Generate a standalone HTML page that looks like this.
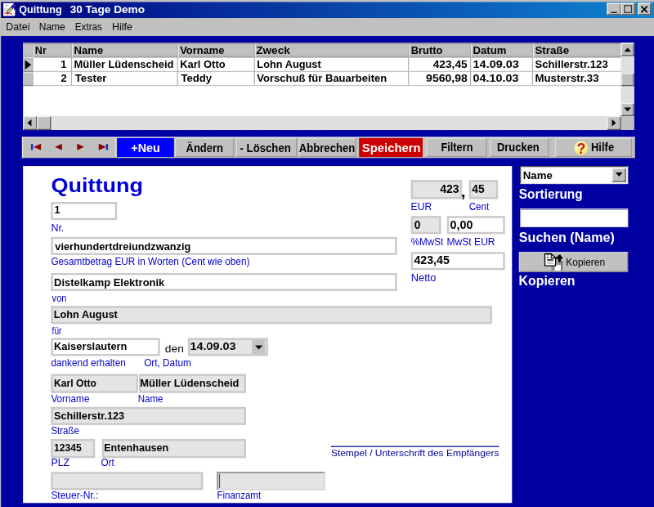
<!DOCTYPE html>
<html lang="de"><head><meta charset="utf-8"><title>Quittung 30 Tage Demo</title>
<style>
html,body{margin:0;padding:0;}
html{width:654px;height:507px;overflow:hidden;background:#0000a0;}
body{width:654px;height:507px;overflow:hidden;background:#0000a0;position:relative;font-family:"Liberation Sans",sans-serif;}
.b{position:absolute;box-sizing:border-box;}
.t{position:absolute;white-space:pre;line-height:20px;height:20px;transform-origin:0 50%;}
svg{position:absolute;overflow:visible;}

.fld{border:2px solid #cacaca;background:#fff;}
.fldg{border:2px solid #cacaca;background:#e4e4e4;}
.btn{background:#c0c0c0;border:1px solid;border-color:#dcdcdc #9a9a9a #9a9a9a #dcdcdc;}
.raised{background:#c0c0c0;border:1px solid;border-color:#f4f4f4 #555 #555 #f4f4f4;}
.dither{background-color:#dfdfdf;background-image:repeating-conic-gradient(#fff 0 25%,#c0c0c0 0 50%);background-size:1.635px 1.635px;}

#root{position:absolute;left:0;top:0;width:800px;height:620px;overflow:hidden;background:#0000a0;transform:scale(0.8175);transform-origin:0 0;will-change:transform;}
#inner{position:absolute;left:0;top:0;width:654px;height:507px;transform:scale(1.22324);transform-origin:0 0;}
</style></head><body>
<div id="root"><div id="inner">
<div class="b" style="left:0.00px;top:0.00px;width:654.00px;height:36.00px;background:#c0c0c0;"></div>
<div class="b" style="left:0.00px;top:36.00px;width:1.20px;height:471.00px;background:#b8b8d8;"></div>
<div class="b" style="left:1.1px;top:2.1px;width:653px;height:15.6px;background:linear-gradient(90deg,#000080 0%,#1084d0 100%);"></div>
<svg style="left:3.2px;top:3px" width="13" height="13" viewBox="0 0 13 13">
<rect x="0.3" y="0.2" width="10.6" height="12.6" fill="#fff"/>
<rect x="0.3" y="6.6" width="11.8" height="6.2" fill="#fff"/><rect x="0.3" y="5" width="5.4" height="5.4" fill="#dcdcdc"/>
<path d="M2 2.2 H5.5" stroke="#999" stroke-width="0.7"/>
<path d="M4.6 9.2 L9 4.6" stroke="#303010" stroke-width="2.6"/>
<path d="M4.8 9 L9 4.6" stroke="#e6e070" stroke-width="1.5"/>
<path d="M8.6 5 L12 1.4" stroke="#10108c" stroke-width="2.8"/>
<path d="M9.4 4.6 L12.2 1.6" stroke="#3a3ae0" stroke-width="1.2"/>
<path d="M3.6 10.6 L5.2 9.4" stroke="#000" stroke-width="0.9"/>
<path d="M1.6 10.6 Q2.6 9.6 3.4 10.6 T5.4 10.6 T7.4 10.6 T9.2 10.6" stroke="#e03030" stroke-width="0.9" fill="none"/>
</svg>
<span class="t" style="left:19.19px;top:-1.00px;font-size:10.5px;color:#fff;font-weight:bold;transform:scaleX(0.9805);">Quittung</span>
<span class="t" style="left:69.95px;top:-1.00px;font-size:10.5px;color:#fff;font-weight:bold;transform:scaleX(1.0606);">30 Tage Demo</span>
<div class="b raised" style="left:607.20px;top:3.40px;width:14.10px;height:12.00px;"></div>
<div class="b raised" style="left:621.30px;top:3.40px;width:14.10px;height:12.00px;"></div>
<div class="b raised" style="left:637.80px;top:3.40px;width:13.60px;height:12.00px;"></div>
<div class="b" style="left:610.8px;top:11.6px;width:6px;height:1.4px;background:#000"></div>
<div class="b" style="left:624.2px;top:5.3px;width:8px;height:7.6px;border:0.9px solid #333;border-top-width:1.6px"></div>
<svg style="left:641.3px;top:5.6px" width="7" height="7" viewBox="0 0 7 7"><path d="M0.3 0.3 L6.3 6.3 M6.3 0.3 L0.3 6.3" stroke="#000" stroke-width="1.4" fill="none"/></svg>
<span class="t" style="left:6.16px;top:17.30px;font-size:10px;color:#000;transform:scaleX(1.0206);">Datei</span>
<span class="t" style="left:39.19px;top:17.30px;font-size:10px;color:#000;transform:scaleX(0.9833);">Name</span>
<span class="t" style="left:75.21px;top:17.30px;font-size:10px;color:#000;transform:scaleX(0.9568);">Extras</span>
<span class="t" style="left:111.76px;top:17.30px;font-size:10px;color:#000;transform:scaleX(1.0133);">Hilfe</span>
<div class="b" style="left:22.50px;top:43.00px;width:611.90px;height:86.60px;background:#fff;"></div>
<div class="b" style="left:22.50px;top:43.00px;width:598.40px;height:14.00px;background:#c0c0c0;"></div>
<div class="b" style="left:22.50px;top:43.00px;width:10.10px;height:42.40px;background:#c0c0c0;"></div>
<div class="b" style="left:22.50px;top:56.50px;width:598.40px;height:1.00px;background:#c4c4c4;"></div>
<div class="b" style="left:22.50px;top:70.70px;width:598.40px;height:1.00px;background:#c4c4c4;"></div>
<div class="b" style="left:22.50px;top:84.90px;width:598.40px;height:1.00px;background:#c4c4c4;"></div>
<div class="b" style="left:22.50px;top:56.40px;width:598.40px;height:0.80px;background:#9c9c9c;"></div>
<div class="b" style="left:32.10px;top:43.00px;width:1.00px;height:42.40px;background:#b0b0b0;"></div>
<div class="b" style="left:33.10px;top:43.00px;width:0.80px;height:14.00px;background:#e8e8e8;"></div>
<div class="b" style="left:70.80px;top:43.00px;width:1.00px;height:42.40px;background:#b0b0b0;"></div>
<div class="b" style="left:71.80px;top:43.00px;width:0.80px;height:14.00px;background:#e8e8e8;"></div>
<div class="b" style="left:177.00px;top:43.00px;width:1.00px;height:42.40px;background:#b0b0b0;"></div>
<div class="b" style="left:178.00px;top:43.00px;width:0.80px;height:14.00px;background:#e8e8e8;"></div>
<div class="b" style="left:253.80px;top:43.00px;width:1.00px;height:42.40px;background:#b0b0b0;"></div>
<div class="b" style="left:254.80px;top:43.00px;width:0.80px;height:14.00px;background:#e8e8e8;"></div>
<div class="b" style="left:408.00px;top:43.00px;width:1.00px;height:42.40px;background:#b0b0b0;"></div>
<div class="b" style="left:409.00px;top:43.00px;width:0.80px;height:14.00px;background:#e8e8e8;"></div>
<div class="b" style="left:469.50px;top:43.00px;width:1.00px;height:42.40px;background:#b0b0b0;"></div>
<div class="b" style="left:470.50px;top:43.00px;width:0.80px;height:14.00px;background:#e8e8e8;"></div>
<div class="b" style="left:532.10px;top:43.00px;width:1.00px;height:42.40px;background:#b0b0b0;"></div>
<div class="b" style="left:533.10px;top:43.00px;width:0.80px;height:14.00px;background:#e8e8e8;"></div>
<div class="b" style="left:22.50px;top:57.00px;width:10.00px;height:0.80px;background:#e8e8e8;"></div>
<div class="b" style="left:22.50px;top:71.50px;width:10.00px;height:0.80px;background:#e8e8e8;"></div>
<div class="b" style="left:22.50px;top:70.60px;width:10.00px;height:0.90px;background:#8c8c8c;"></div>
<div class="b" style="left:22.50px;top:84.80px;width:10.00px;height:0.90px;background:#8c8c8c;"></div>
<div class="b" style="left:22.50px;top:43.00px;width:611.90px;height:0.70px;background:#8a8a8a;"></div>
<svg style="left:25px;top:59.8px" width="6.2" height="9.4" viewBox="0 0 6.2 9.4"><path d="M0 0 L6.2 4.7 L0 9.4 Z" fill="#000"/></svg>
<span class="t" style="left:35.31px;top:39.60px;font-size:10.5px;color:#000;font-weight:bold;transform:scaleX(0.9801);">Nr</span>
<span class="t" style="left:73.98px;top:39.60px;font-size:10.5px;color:#000;font-weight:bold;transform:scaleX(1.0205);">Name</span>
<span class="t" style="left:179.92px;top:39.60px;font-size:10.5px;color:#000;font-weight:bold;transform:scaleX(1.0061);">Vorname</span>
<span class="t" style="left:256.27px;top:39.60px;font-size:10.5px;color:#000;font-weight:bold;transform:scaleX(1.0633);">Zweck</span>
<span class="t" style="left:410.79px;top:39.60px;font-size:10.5px;color:#000;font-weight:bold;transform:scaleX(1.0042);">Brutto</span>
<span class="t" style="left:472.78px;top:39.60px;font-size:10.5px;color:#000;font-weight:bold;transform:scaleX(1.0218);">Datum</span>
<span class="t" style="left:535.30px;top:39.60px;font-size:10.5px;color:#000;font-weight:bold;transform:scaleX(1.0429);">Straße</span>
<span class="t" style="left:60.73px;top:53.80px;font-size:10.5px;color:#000;font-weight:bold;">1</span>
<span class="t" style="left:73.98px;top:53.80px;font-size:10.5px;color:#000;font-weight:bold;transform:scaleX(1.0113);">Müller Lüdenscheid</span>
<span class="t" style="left:179.78px;top:53.80px;font-size:10.5px;color:#000;font-weight:bold;transform:scaleX(1.0089);">Karl Otto</span>
<span class="t" style="left:256.59px;top:53.80px;font-size:10.5px;color:#000;font-weight:bold;transform:scaleX(0.9949);">Lohn August</span>
<span class="t" style="left:432.63px;top:53.80px;font-size:10.5px;color:#000;font-weight:bold;transform:scaleX(1.0699);">423,45</span>
<span class="t" style="left:472.76px;top:53.80px;font-size:10.5px;color:#000;font-weight:bold;transform:scaleX(1.1243);">14.09.03</span>
<span class="t" style="left:535.30px;top:53.80px;font-size:10.5px;color:#000;font-weight:bold;transform:scaleX(1.0247);">Schillerstr.123</span>
<span class="t" style="left:60.87px;top:68.00px;font-size:10.5px;color:#000;font-weight:bold;">2</span>
<span class="t" style="left:74.79px;top:68.00px;font-size:10.5px;color:#000;font-weight:bold;transform:scaleX(1.0303);">Tester</span>
<span class="t" style="left:181.19px;top:68.00px;font-size:10.5px;color:#000;font-weight:bold;transform:scaleX(1.0241);">Teddy</span>
<span class="t" style="left:257.22px;top:68.00px;font-size:10.5px;color:#000;font-weight:bold;transform:scaleX(1.0130);">Vorschuß für Bauarbeiten</span>
<span class="t" style="left:425.60px;top:68.00px;font-size:10.5px;color:#000;font-weight:bold;transform:scaleX(1.0927);">9560,98</span>
<span class="t" style="left:473.03px;top:68.00px;font-size:10.5px;color:#000;font-weight:bold;transform:scaleX(1.1177);">04.10.03</span>
<span class="t" style="left:534.87px;top:68.00px;font-size:10.5px;color:#000;font-weight:bold;transform:scaleX(1.0318);">Musterstr.33</span>
<div class="b dither" style="left:620.90px;top:43.00px;width:13.50px;height:73.00px;"></div>
<div class="b dither" style="left:22.50px;top:116.00px;width:598.40px;height:13.60px;"></div>
<div class="b" style="left:620.90px;top:116.00px;width:13.50px;height:13.60px;background:#c0c0c0;"></div>
<div class="b raised" style="left:620.90px;top:43.00px;width:13.50px;height:13.40px;"></div>
<div class="b raised" style="left:620.90px;top:73.00px;width:13.50px;height:12.80px;"></div>
<div class="b raised" style="left:620.90px;top:102.70px;width:13.50px;height:13.30px;"></div>
<div class="b raised" style="left:22.50px;top:116.00px;width:14.30px;height:13.60px;"></div>
<div class="b raised" style="left:36.80px;top:116.00px;width:14.10px;height:13.60px;"></div>
<div class="b raised" style="left:606.80px;top:116.00px;width:14.10px;height:13.60px;"></div>
<svg style="left:0;top:0" width="654" height="507"><path d="M624.1 51.8 L631.1 51.8 L627.6 47.8 Z" fill="#000"/></svg>
<svg style="left:0;top:0" width="654" height="507"><path d="M624.1 107.5 L631.1 107.5 L627.6 111.5 Z" fill="#000"/></svg>
<svg style="left:0;top:0" width="654" height="507"><path d="M31.4 119.3 L31.4 126.3 L27.4 122.8 Z" fill="#000"/></svg>
<svg style="left:0;top:0" width="654" height="507"><path d="M612.0 119.3 L612.0 126.3 L616.0 122.8 Z" fill="#000"/></svg>
<div class="b" style="left:22.30px;top:137.00px;width:612.30px;height:21.00px;background:#c0c0c0;"></div>
<div class="b" style="left:22.30px;top:137.00px;width:612.30px;height:0.90px;background:#ececec;"></div>
<div class="b" style="left:22.30px;top:137.00px;width:0.90px;height:21.00px;background:#ececec;"></div>
<svg style="left:0;top:0" width="654" height="507"><path d="M41.0 143.7 L41.0 150.3 L33.599999999999994 147 Z" fill="#8b0000"/></svg>
<div class="b" style="left:31.00px;top:143.60px;width:1.80px;height:6.80px;background:#2828c0;"></div>
<svg style="left:0;top:0" width="654" height="507"><path d="M62.0 143.7 L62.0 150.3 L55.0 147 Z" fill="#8b0000"/></svg>
<svg style="left:0;top:0" width="654" height="507"><path d="M77.1 143.7 L77.1 150.3 L84.1 147 Z" fill="#8b0000"/></svg>
<svg style="left:0;top:0" width="654" height="507"><path d="M98.7 143.7 L98.7 150.3 L106.10000000000001 147 Z" fill="#8b0000"/></svg>
<div class="b" style="left:106.40px;top:143.60px;width:1.80px;height:6.80px;background:#2828c0;"></div>
<div class="b" style="left:114.60px;top:138.00px;width:1.80px;height:19.00px;background:#dcdcdc;"></div>
<div class="b" style="left:116.60px;top:138.00px;width:57.40px;height:18.80px;background:#0000ff;"></div>
<span class="t" style="left:131.00px;top:137.60px;font-size:11.3px;color:#fff;font-weight:bold;transform:scaleX(1.0402);">+Neu</span>
<div class="b btn" style="left:175.00px;top:138.00px;width:58.80px;height:18.80px;"></div>
<span class="t" style="left:185.73px;top:137.60px;font-size:11.3px;color:#000;font-weight:bold;transform:scaleX(0.9407);">Ändern</span>
<div class="b btn" style="left:235.50px;top:138.00px;width:61.10px;height:18.80px;"></div>
<span class="t" style="left:240.30px;top:137.60px;font-size:11.3px;color:#000;font-weight:bold;transform:scaleX(0.9529);">- Löschen</span>
<div class="b btn" style="left:298.60px;top:138.00px;width:57.60px;height:18.80px;"></div>
<span class="t" style="left:299.43px;top:137.60px;font-size:11.3px;color:#000;font-weight:bold;transform:scaleX(0.9491);">Abbrechen</span>
<div class="b" style="left:358.60px;top:138.00px;width:64.40px;height:18.80px;background:#cc0000;"></div>
<div class="b" style="left:423.00px;top:138.00px;width:1.00px;height:18.80px;background:#e4e4e4;"></div>
<span class="t" style="left:361.67px;top:137.90px;font-size:12px;color:#fff;font-weight:bold;transform:scaleX(1.0111);">Speichern</span>
<div class="b btn" style="left:426.00px;top:138.00px;width:61.20px;height:18.80px;"></div>
<span class="t" style="left:440.69px;top:136.60px;font-size:11.3px;color:#000;font-weight:bold;transform:scaleX(0.9250);">Filtern</span>
<div class="b btn" style="left:490.00px;top:138.00px;width:59.20px;height:18.80px;"></div>
<span class="t" style="left:497.29px;top:136.60px;font-size:11.3px;color:#000;font-weight:bold;transform:scaleX(0.9369);">Drucken</span>
<div class="b btn" style="left:555.00px;top:138.00px;width:77.00px;height:18.80px;"></div>
<span class="t" style="left:591.28px;top:136.60px;font-size:11.3px;color:#000;font-weight:bold;transform:scaleX(0.9428);">Hilfe</span>
<svg style="left:573.8px;top:140.8px" width="14" height="14.4" viewBox="0 0 14 14.4">
<defs><radialGradient id="hg" cx="0.4" cy="0.35" r="0.7"><stop offset="0" stop-color="#fffbd0"/><stop offset="1" stop-color="#ffe860"/></radialGradient></defs>
<ellipse cx="7" cy="7.1" rx="6.8" ry="6.9" fill="url(#hg)"/>
<text x="7.1" y="12.4" text-anchor="middle" font-family="Liberation Sans, sans-serif" font-weight="bold" font-size="14.6" fill="#cc1414">?</text></svg>
<div class="b" style="left:22.50px;top:165.60px;width:489.90px;height:337.40px;background:#fff;"></div>
<span class="t" style="left:50.82px;top:175.20px;font-size:19.4px;color:#0000dc;font-weight:bold;transform:scaleX(1.1388);">Quittung</span>
<div class="b fld" style="left:51.20px;top:201.50px;width:65.60px;height:18.10px;"></div>
<span class="t" style="left:54.35px;top:200.30px;font-size:10.4px;color:#000;font-weight:bold;">1</span>
<span class="t" style="left:51.06px;top:217.80px;font-size:9.9px;color:#0000c8;transform:scaleX(1.0330);">Nr.</span>
<div class="b fld" style="left:51.20px;top:237.40px;width:345.40px;height:18.00px;"></div>
<span class="t" style="left:54.87px;top:236.60px;font-size:10.4px;color:#000;font-weight:bold;transform:scaleX(1.0045);">vierhundertdreiundzwanzig</span>
<span class="t" style="left:50.82px;top:251.60px;font-size:9.9px;color:#0000c8;transform:scaleX(0.9765);">Gesamtbetrag EUR in Worten (Cent wie oben)</span>
<div class="b fld" style="left:51.30px;top:273.40px;width:345.30px;height:17.60px;"></div>
<span class="t" style="left:53.79px;top:273.00px;font-size:10.4px;color:#000;font-weight:bold;transform:scaleX(1.0178);">Distelkamp Elektronik</span>
<span class="t" style="left:51.78px;top:288.50px;font-size:9.9px;color:#0000c8;transform:scaleX(0.9153);">von</span>
<div class="b fldg" style="left:51.30px;top:306.00px;width:440.30px;height:17.80px;"></div>
<span class="t" style="left:53.80px;top:305.00px;font-size:10.4px;color:#000;font-weight:bold;">Lohn August</span>
<span class="t" style="left:51.70px;top:320.50px;font-size:9.9px;color:#0000c8;transform:scaleX(0.8418);">für</span>
<div class="b fld" style="left:51.30px;top:338.00px;width:108.30px;height:17.60px;"></div>
<span class="t" style="left:53.79px;top:337.30px;font-size:10.4px;color:#000;font-weight:bold;transform:scaleX(1.0123);">Kaiserslautern</span>
<span class="t" style="left:164.52px;top:337.50px;font-size:11px;color:#000;transform:scaleX(1.0240);">den</span>
<span class="t" style="left:50.89px;top:353.20px;font-size:9.9px;color:#0000c8;transform:scaleX(0.9793);">dankend erhalten</span>
<span class="t" style="left:143.84px;top:353.20px;font-size:9.9px;color:#0000c8;transform:scaleX(0.9768);">Ort, Datum</span>
<div class="b fldg" style="left:187.80px;top:338.00px;width:79.80px;height:18.00px;"></div>
<span class="t" style="left:190.46px;top:337.00px;font-size:10.4px;color:#000;font-weight:bold;transform:scaleX(1.1351);">14.09.03</span>
<div class="b" style="left:252.40px;top:340.20px;width:13.00px;height:13.80px;background:#c4c4c4;"></div>
<svg style="left:0;top:0" width="654" height="507"><path d="M255.10000000000002 345.4 L262.5 345.4 L258.8 349.4 Z" fill="#000"/></svg>
<div class="b fldg" style="left:51.30px;top:374.40px;width:86.30px;height:18.60px;"></div>
<span class="t" style="left:53.53px;top:374.00px;font-size:10.4px;color:#000;font-weight:bold;transform:scaleX(0.9540);">Karl Otto</span>
<div class="b fldg" style="left:138.60px;top:374.40px;width:107.60px;height:18.60px;"></div>
<span class="t" style="left:140.09px;top:374.00px;font-size:10.4px;color:#000;font-weight:bold;transform:scaleX(1.0158);">Müller Lüdenscheid</span>
<span class="t" style="left:51.45px;top:389.00px;font-size:9.9px;color:#0000c8;transform:scaleX(0.9731);">Vorname</span>
<span class="t" style="left:138.12px;top:389.00px;font-size:9.9px;color:#0000c8;transform:scaleX(0.9535);">Name</span>
<div class="b fldg" style="left:51.30px;top:406.60px;width:194.90px;height:18.80px;"></div>
<span class="t" style="left:53.91px;top:406.00px;font-size:10.4px;color:#000;font-weight:bold;">Schillerstr.123</span>
<span class="t" style="left:51.08px;top:421.00px;font-size:9.9px;color:#0000c8;transform:scaleX(0.9537);">Straße</span>
<div class="b fldg" style="left:51.30px;top:439.00px;width:43.50px;height:19.00px;"></div>
<span class="t" style="left:53.58px;top:438.40px;font-size:10.4px;color:#000;font-weight:bold;transform:scaleX(0.9571);">12345</span>
<div class="b fldg" style="left:101.80px;top:439.00px;width:144.40px;height:19.00px;"></div>
<span class="t" style="left:103.90px;top:438.40px;font-size:10.4px;color:#000;font-weight:bold;transform:scaleX(0.9912);">Entenhausen</span>
<span class="t" style="left:50.66px;top:453.30px;font-size:9.9px;color:#0000c8;transform:scaleX(1.0277);">PLZ</span>
<span class="t" style="left:101.34px;top:453.30px;font-size:9.9px;color:#0000c8;transform:scaleX(0.9703);">Ort</span>
<div class="b fldg" style="left:51.30px;top:471.60px;width:151.70px;height:18.80px;"></div>
<div class="b" style="left:217.00px;top:471.60px;width:107.80px;height:18.80px;background:#e4e4e4;border:1.5px solid;border-color:#707070 #d0d0d0 #d0d0d0 #707070;"></div>
<div class="b" style="left:219.40px;top:474.00px;width:1.00px;height:14.00px;background:#555;"></div>
<span class="t" style="left:51.06px;top:485.50px;font-size:9.9px;color:#0000c8;transform:scaleX(0.9908);">Steuer-Nr.:</span>
<span class="t" style="left:216.52px;top:485.50px;font-size:9.9px;color:#0000c8;transform:scaleX(0.9511);">Finanzamt</span>
<div class="b" style="left:331.30px;top:445.90px;width:167.90px;height:0.90px;background:#000090;"></div>
<span class="t" style="left:331.16px;top:442.70px;font-size:9.6px;color:#000090;transform:scaleX(1.0200);">Stempel / Unterschrift des Empfängers</span>
<div class="b fldg" style="left:411.20px;top:180.00px;width:50.80px;height:19.00px;"></div>
<span class="t" style="left:440.43px;top:178.60px;font-size:11.6px;color:#000;font-weight:bold;transform:scaleX(0.9913);">423</span>
<span class="t" style="left:460.85px;top:182.20px;font-size:17px;color:#000;font-weight:bold;">,</span>
<div class="b fldg" style="left:468.60px;top:180.00px;width:29.40px;height:19.00px;"></div>
<span class="t" style="left:471.83px;top:178.80px;font-size:11.6px;color:#000;font-weight:bold;transform:scaleX(0.9668);">45</span>
<span class="t" style="left:410.88px;top:196.80px;font-size:9.9px;color:#0000c8;">EUR</span>
<span class="t" style="left:468.52px;top:196.80px;font-size:9.9px;color:#0000c8;transform:scaleX(0.9634);">Cent</span>
<div class="b fldg" style="left:411.20px;top:216.00px;width:29.60px;height:17.60px;"></div>
<span class="t" style="left:414.35px;top:214.50px;font-size:11.200000000000001px;color:#000;font-weight:bold;">0</span>
<div class="b fld" style="left:447.00px;top:216.00px;width:58.40px;height:17.60px;"></div>
<span class="t" style="left:449.93px;top:214.50px;font-size:11.200000000000001px;color:#000;font-weight:bold;transform:scaleX(1.0484);">0,00</span>
<span class="t" style="left:411.07px;top:232.20px;font-size:9.9px;color:#0000c8;transform:scaleX(0.9656);">%MwSt</span>
<span class="t" style="left:446.79px;top:232.20px;font-size:9.9px;color:#0000c8;">MwSt EUR</span>
<div class="b fld" style="left:411.20px;top:252.40px;width:94.20px;height:17.60px;"></div>
<span class="t" style="left:414.23px;top:250.40px;font-size:11.200000000000001px;color:#000;font-weight:bold;transform:scaleX(1.0356);">423,45</span>
<span class="t" style="left:410.83px;top:268.00px;font-size:9.9px;color:#0000c8;transform:scaleX(1.0647);">Netto</span>
<div class="b" style="left:519.60px;top:166.00px;width:108.20px;height:17.60px;background:#fff;border:1.2px solid;border-color:#404040 #e0e0e0 #e0e0e0 #404040;"></div>
<span class="t" style="left:522.87px;top:165.00px;font-size:11px;color:#000;font-weight:bold;transform:scaleX(0.9845);">Name</span>
<div class="b raised" style="left:612.40px;top:167.80px;width:13.20px;height:14.60px;"></div>
<svg style="left:0;top:0" width="654" height="507"><path d="M615.6 172.5 L622.6 172.5 L619.1 176.5 Z" fill="#000"/></svg>
<span class="t" style="left:519.25px;top:185.40px;font-size:13px;color:#fff;font-weight:bold;transform:scaleX(0.9673);">Sortierung</span>
<div class="b" style="left:519.60px;top:208.80px;width:108.20px;height:18.20px;background:#fff;border:1.2px solid;border-color:#a0a0c0 #e8e8f8 #e8e8f8 #a0a0c0;"></div>
<span class="t" style="left:519.24px;top:228.30px;font-size:13px;color:#fff;font-weight:bold;transform:scaleX(1.0100);">Suchen (Name)</span>
<div class="b" style="left:519.00px;top:251.80px;width:109.00px;height:19.80px;background:#c0c0c0;border:1px solid;border-color:#d8d8d8 #909090 #909090 #d8d8d8;"></div>
<span class="t" style="left:565.60px;top:253.00px;font-size:10px;color:#000;transform:scaleX(0.9747);">Kopieren</span>
<span class="t" style="left:518.72px;top:271.30px;font-size:13px;color:#fff;font-weight:bold;">Kopieren</span>
<svg style="left:543.6px;top:252.8px" width="19.4" height="18" viewBox="0 0 19.4 18">
<path d="M7.4 9.6 H10.8 V17.6 H7.4 Z" fill="#8c8c8c"/>
<path d="M10.8 11.2 H17.6 V17.6 H10.8 Z" fill="#fff"/>
<path d="M17.7 8 V17.6" stroke="#111" stroke-width="0.9"/>
<path d="M12.6 9 H17.4 V12 H12.6 Z" fill="#9a9a9a"/>
<path d="M0.9 0.8 H7.2 L11.6 5 V12.8 H0.9 Z" fill="#fff" stroke="#000" stroke-width="1.1"/>
<path d="M7.2 0.8 V5 H11.6" fill="none" stroke="#000" stroke-width="0.9"/>
<path d="M3.2 1.8 h1.4 M3.2 4.3 h1.4" stroke="#000" stroke-width="1.1"/>
<path d="M3.2 6.9 H9.2" stroke="#000" stroke-width="1.2"/>
<path d="M3.2 8.8 H9.2 M3.2 10.4 H9.2" stroke="#777" stroke-width="0.8" stroke-dasharray="1.4 0.7"/>
<path d="M12.2 3.4 H18.4 V6 H16.9 V8.4 L15.6 9.6 L14 8.4 V6 H12.2 Z M14.2 1.8 H16.8 V3.6 H14.2 Z" fill="#000"/>
</svg>
</div></div>
</body></html>
